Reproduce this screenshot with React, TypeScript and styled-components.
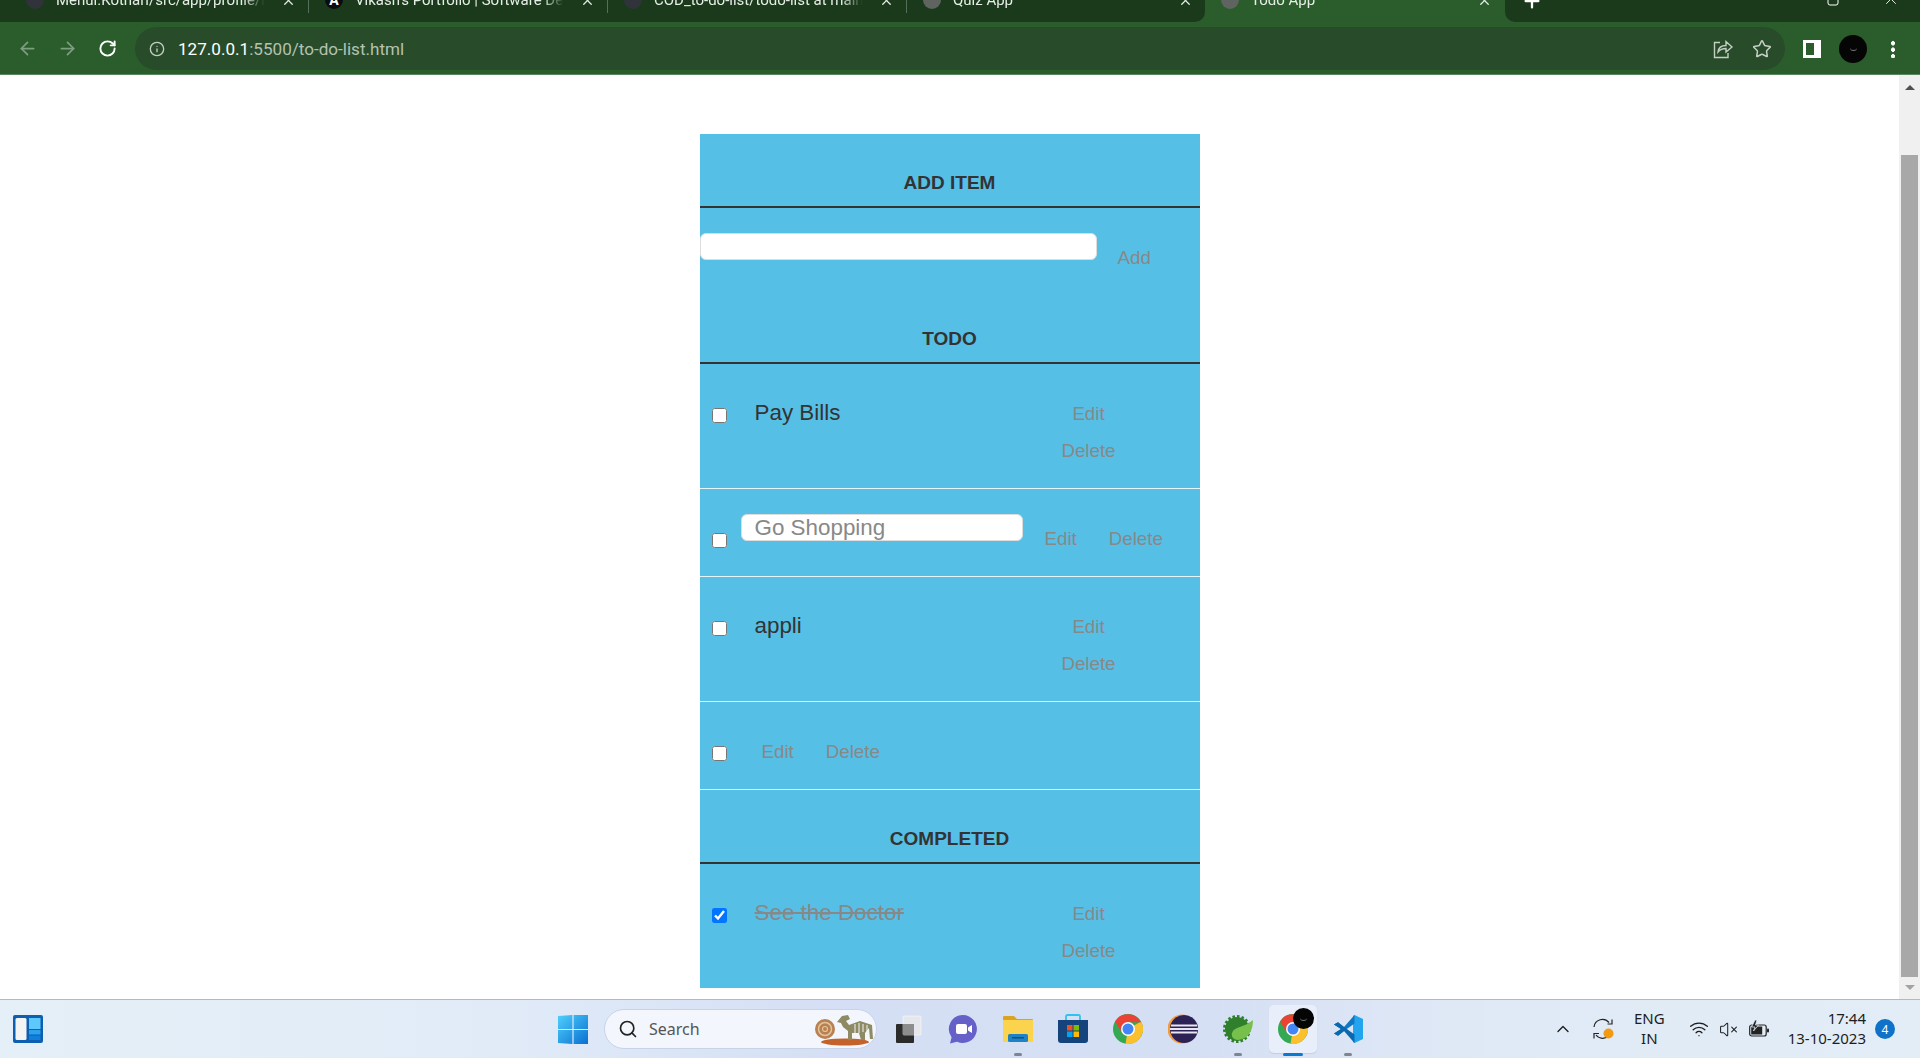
import styled, { createGlobalStyle } from 'styled-components';
import { ArrowLeft, ArrowRight, ChevronUp, Info, Plus, RotateCw, Search, Star, VolumeX, Wifi, X } from 'lucide-react';

const PANEL_BLUE = '#56bfe6';
const TAB_DARK = '#1a3a1b';
const TOOLBAR_GREEN = '#2a5d2b';

const GlobalStyle = createGlobalStyle`
  html, body {
    margin: 0;
    padding: 0;
    overflow: hidden;
    background: #fff;
  }
  * {
    box-sizing: border-box;
  }
`;

const Screen = styled.div`
  width: 1920px;
  height: 1058px;
  display: flex;
  flex-direction: column;
  overflow: hidden;
  font-family: 'Liberation Sans', Arial, sans-serif;
`;

/* browser chrome */
const TabStrip = styled.div`
  height: 22px;
  flex: none;
  display: flex;
  overflow: hidden;
  background: ${TOOLBAR_GREEN};
  font-family: Roboto, sans-serif;
  font-size: 15px;
  color: #e6ece6;
`;

const DarkTabs = styled.div`
  width: 1205px;
  height: 22px;
  padding-left: 10px;
  display: flex;
  background: ${TAB_DARK};
  border-bottom-right-radius: 10px;
`;

const Tab = styled.div<{ $active?: boolean }>`
  width: ${(p) => (p.$active ? '300px' : '299px')};
  height: 26px;
  margin-top: -13px;
  padding: 0 12px 0 16px;
  display: flex;
  align-items: center;
  gap: 12px;
  flex: none;
  border-right: 1px solid ${(p) => (p.$active ? 'transparent' : '#52705a')};

  &:nth-child(4) {
    border-right-color: transparent;
  }
`;

const TabTitle = styled.span`
  flex: 1;
  white-space: nowrap;
  overflow: hidden;
  -webkit-mask-image: linear-gradient(90deg, #000 88%, transparent 98%);
  mask-image: linear-gradient(90deg, #000 88%, transparent 98%);
`;

const Favicon = styled.span<{ $color: string }>`
  width: 18px;
  height: 18px;
  flex: none;
  border-radius: 50%;
  display: flex;
  align-items: center;
  justify-content: center;
  background: ${(p) => p.$color};
  font-size: 14px;
  font-weight: 700;
  color: #fff;
`;

const DarkRest = styled.div`
  flex: 1;
  height: 22px;
  display: flex;
  background: ${TAB_DARK};
  border-bottom-left-radius: 10px;
  color: #fff;
`;

const StripIcon = styled.span<{ $left: number; $top: number }>`
  height: 26px;
  margin: ${(p) => p.$top}px 0 0 ${(p) => p.$left}px;
  display: flex;
  align-items: center;
`;

const Toolbar = styled.div`
  height: 53px;
  flex: none;
  padding: 5px 0 4px 7px;
  display: flex;
  align-items: center;
  background: ${TOOLBAR_GREEN};
  border-bottom: 1px solid #5b8560;
`;

const NavButton = styled.span<{ $dim?: boolean }>`
  width: 40px;
  display: flex;
  justify-content: center;
  color: ${(p) => (p.$dim ? '#7d9f80' : '#fff')};
`;

const AddressBar = styled.div`
  width: 1650px;
  height: 43px;
  margin-left: 8px;
  padding: 0 13px 0 14px;
  display: flex;
  align-items: center;
  border-radius: 22px;
  background: #284c2a;
  color: #c4cfc4;
`;

const Url = styled.span`
  flex: 1;
  margin-left: 13px;
  font-family: Roboto, sans-serif;
  font-size: 17.1px;
  color: #b3c2b3;
`;

const UrlHost = styled.span`
  color: #fff;
`;

const BarIcon = styled.span<{ $left: number }>`
  margin-left: ${(p) => p.$left}px;
  display: flex;
`;

const ToolbarRight = styled.div`
  display: flex;
  align-items: center;
  color: #fff;
`;

const SidePanelIcon = styled.span`
  width: 18px;
  height: 18px;
  margin-left: 18px;
  background: #fff;
  padding: 3px 7px 3px 3px;

  &::before {
    content: '';
    display: block;
    width: 8px;
    height: 12px;
    background: ${TOOLBAR_GREEN};
  }
`;

const Avatar = styled.span<{ $size: number }>`
  width: ${(p) => p.$size}px;
  height: ${(p) => p.$size}px;
  border-radius: 50%;
  background: #050505;
  display: flex;
  align-items: center;
  justify-content: center;

  &::before {
    content: '';
    width: 7px;
    height: 3px;
    border-bottom: 1px solid #777;
    border-radius: 0 0 4px 4px;
  }
`;

const ToolbarAvatar = styled(Avatar)`
  margin-left: 18px;
`;

const Kebab = styled.span`
  margin-left: 24px;
  width: 4px;
  height: 18px;
  background: radial-gradient(circle, #fff 1.9px, transparent 2.2px) 0 0 / 4px 6.5px repeat-y;
`;

/* page */
const PageArea = styled.div`
  flex: 1;
  min-height: 0;
  display: flex;
  background: #fff;
`;

const PageContent = styled.main`
  flex: 1;
  padding-top: 59px;
  display: flex;
  justify-content: center;
`;

const Panel = styled.section`
  width: 500px;
  height: 854px;
  background: ${PANEL_BLUE};
  color: #333;
`;

const SectionHeading = styled.h3`
  margin: 0;
  padding: 38px 0 13px;
  font-size: 19px;
  font-weight: 700;
  line-height: 21px;
  text-align: center;
  text-transform: uppercase;
  border-bottom: 2px solid #333;
`;

const AddRow = styled.div`
  height: 82px;
  display: flex;
  align-items: flex-start;
  gap: 11px;
`;

const TextField = styled.input<{ $width: number; $indent: number }>`
  width: ${(p) => p.$width}px;
  height: 27px;
  margin-top: 25px;
  flex: none;
  padding: 0 0 0 ${(p) => p.$indent}px;
  border: 1px solid #ddd;
  border-radius: 6px;
  background: #fff;
  font-family: inherit;
  font-size: 22.4px;
  color: #888;
  outline: none;
`;

const TodoList = styled.ul`
  margin: 0;
  padding: 0;
  list-style: none;
`;

const TodoRow = styled.li<{ $last?: boolean }>`
  padding: 0 0 ${(p) => (p.$last ? '19px' : '20px')} 12px;
  display: flex;
  align-items: flex-start;
  border-bottom: ${(p) => (p.$last ? 'none' : '1px solid #e6f4fb')};
`;

const Check = styled.input`
  width: 15px;
  height: 15px;
  margin: 44px 0 0;
  flex: none;
`;

const TodoTitle = styled.label<{ $done?: boolean }>`
  flex: 1;
  margin: 29px 0 0 28px;
  font-size: 22.4px;
  line-height: 40px;
  color: ${(p) => (p.$done ? '#888' : '#333')};
  text-decoration: ${(p) => (p.$done ? 'line-through' : 'none')};
`;

const StackedActions = styled.div`
  width: 100px;
  margin: 30px 61px 0 0;
  display: flex;
  flex-direction: column;
  align-items: center;
`;

const InlineActions = styled.div<{ $left: number }>`
  margin: 30px 0 0 ${(p) => p.$left}px;
  display: flex;
  gap: 12px;
`;

const LinkButton = styled.button`
  height: 37px;
  padding: 2px 10px 0;
  border: none;
  background: none;
  font-family: inherit;
  font-size: 18.72px;
  color: #888;
`;

const AddButton = styled(LinkButton)`
  margin-top: 30px;
`;

const InlineField = styled(TextField)`
  margin-left: 14px;
`;

const Scrollbar = styled.aside`
  width: 21px;
  flex: none;
  padding: 0 2px;
  display: flex;
  flex-direction: column;
  align-items: center;
  background: #f0f0f0;
`;

const ScrollArrow = styled.span<{ $down?: boolean }>`
  width: 0;
  height: 0;
  margin: ${(p) => (p.$down ? '8px 0 0' : '10px 0 0')};
  border-left: 5px solid transparent;
  border-right: 5px solid transparent;
  border-${(p) => (p.$down ? 'top' : 'bottom')}: 5px solid ${(p) => (p.$down ? '#a3a3a3' : '#505050')};
`;

const ScrollThumb = styled.span`
  width: 100%;
  height: 822px;
  margin-top: 65px;
  background: #a8a8a8;
`;

/* taskbar */
const Taskbar = styled.footer`
  height: 59px;
  flex: none;
  display: grid;
  grid-template-columns: 545.5px auto 1fr;
  background: linear-gradient(90deg, #e5eff7 0%, #e2ecf8 24%, #d4dff5 44%, #d5dff4 62%, #e0eaf6 78%, #e3edf6 100%);
  border-top: 1px solid #b4b9be;
`;

const TaskLeft = styled.div`
  padding-left: 13px;
  display: flex;
  align-items: center;
`;

const TaskCenter = styled.div`
  display: flex;
  align-items: center;
`;

const TaskSlot = styled.div`
  position: relative;
  width: 55px;
  height: 48px;
  display: flex;
  align-items: center;
  justify-content: center;
`;

const ActiveTile = styled.span`
  position: absolute;
  left: 3px;
  top: 0;
  width: 48px;
  height: 48px;
  border-radius: 5px;
  background: #e8eefa;
  box-shadow: 0 1px 1px #c6cfe2;
`;

const RunDot = styled.span<{ $active?: boolean }>`
  position: absolute;
  left: 50%;
  bottom: -3px;
  width: ${(p) => (p.$active ? '20px' : '8px')};
  height: 3px;
  transform: translateX(-50%);
  border-radius: 2px;
  background: ${(p) => (p.$active ? '#0b78d0' : '#7d8590')};
`;

const SlotBadge = styled(Avatar)`
  position: absolute;
  top: 3px;
  left: 27px;
`;

const SlotIcon = styled.span`
  position: relative;
  display: flex;
`;

const SearchPill = styled.div`
  position: relative;
  width: 273px;
  height: 40px;
  margin: 0 3.5px 0 3.5px;
  padding-left: 13px;
  display: flex;
  align-items: center;
  gap: 11px;
  border: 1px solid #c9d3e8;
  border-radius: 20px;
  background: #f3f6fd;
  font-family: 'Noto Sans', sans-serif;
  font-size: 16px;
  color: #555;
`;

const SearchArt = styled.span`
  position: absolute;
  right: 1px;
  top: 3px;
  display: flex;
`;

const Tray = styled.div`
  padding-right: 25px;
  display: flex;
  align-items: center;
  justify-content: flex-end;
  font-family: 'Noto Sans', sans-serif;
  font-size: 15px;
  color: #1d1d1d;
`;

const TrayIcon = styled.span<{ $right: number }>`
  margin-right: ${(p) => p.$right}px;
  display: flex;
`;

const TrayText = styled.div<{ $align: string; $right: number }>`
  margin-right: ${(p) => p.$right}px;
  padding-bottom: 2px;
  line-height: 20px;
  text-align: ${(p) => p.$align};
  white-space: nowrap;
`;

const NoticeBadge = styled.span`
  width: 20px;
  height: 20px;
  border-radius: 50%;
  display: flex;
  align-items: center;
  justify-content: center;
  background: #0f72c8;
  color: #fff;
  font-size: 12px;
`;

const ChromeLogo = ({ size = 30 }: { size?: number }) => (
  <svg width={size} height={size} viewBox="0 0 24 24">
    <circle cx="12" cy="12" r="12" fill="#34a853" />
    <path d="M12 12 22.4 6A12 12 0 0 1 10 23.8Z" fill="#fbc02d" />
    <path d="M12 6.5H22.4A12 12 0 0 0 1.6 6L7 14.8Z" fill="#ea4335" />
    <circle cx="12" cy="12" r="5.6" fill="#fff" />
    <circle cx="12" cy="12" r="4.4" fill="#4285f4" />
  </svg>
);

const WidgetsLogo = () => (
  <svg width="30" height="28" viewBox="0 0 30 28">
    <rect width="30" height="28" rx="2" fill="#0f5fb0" />
    <rect x="2.5" y="3" width="11" height="22" rx="1.5" fill="#f4f4f4" />
    <rect x="16" y="3" width="11.5" height="11" fill="#5cc8fb" />
    <rect x="16" y="15" width="11.5" height="4.5" fill="#2aa0ee" />
    <rect x="16" y="20.5" width="11.5" height="4.5" fill="#0f7fdc" />
  </svg>
);

const StartLogo = () => (
  <svg width="30" height="29" viewBox="0 0 30 29">
    <defs>
      <linearGradient id="startGrad" x1="0" y1="0" x2="1" y2="1">
        <stop offset="0" stopColor="#4fd0fb" />
        <stop offset="1" stopColor="#0a6fd2" />
      </linearGradient>
    </defs>
    <path d="M0 1 14.4 0V14H0ZM15.6 0 30 0V14H15.6ZM0 15H14.4V29L0 28ZM15.6 15H30V29H15.6Z" fill="url(#startGrad)" />
  </svg>
);

const TaskViewLogo = () => (
  <svg width="28" height="28" viewBox="0 0 28 28">
    <rect x="2" y="9" width="18" height="19" rx="1" fill="#2b2b2b" />
    <rect x="9" y="1" width="18" height="19" rx="1" fill="#e8e8ea" fillOpacity="0.88" stroke="#fff" strokeWidth="0.5" />
    <rect x="9" y="9" width="11" height="11" fill="#8d8d8d" />
  </svg>
);

const MeetLogo = () => (
  <svg width="30" height="30" viewBox="0 0 30 30">
    <path d="M15 1a14 14 0 1 1-6 26.7L2 29.5l1.6-6.3A14 14 0 0 1 15 1Z" fill="#6561c9" />
    <rect x="8" y="10" width="11" height="10" rx="2" fill="#fff" />
    <path d="M20 13.5 24 11v8l-4-2.5Z" fill="#fff" />
  </svg>
);

const FolderLogo = () => (
  <svg width="30" height="30" viewBox="0 0 30 30">
    <path d="M0 3a1 1 0 0 1 1-1h10l3 3h15a1 1 0 0 1 1 1v3H0Z" fill="#d9a520" />
    <path d="M0 6h30v22H0Z" fill="#fcd34d" />
    <rect x="5" y="20" width="20" height="8" rx="1.5" fill="#1d83c6" />
    <rect x="9" y="23" width="12" height="1.5" fill="#0f4f86" />
  </svg>
);

const StoreLogo = () => (
  <svg width="30" height="30" viewBox="0 0 30 30">
    <path d="M8 6V2.5A1.5 1.5 0 0 1 9.5 1h11A1.5 1.5 0 0 1 22 2.5V6" fill="none" stroke="#2fc4ef" strokeWidth="1.8" />
    <path d="M0 6h30v20a3 3 0 0 1-3 3H3a3 3 0 0 1-3-3Z" fill="#15447d" />
    <rect x="9" y="11" width="5.5" height="5.5" fill="#f25022" />
    <rect x="15.5" y="11" width="5.5" height="5.5" fill="#7fba00" />
    <rect x="9" y="17.5" width="5.5" height="5.5" fill="#00a4ef" />
    <rect x="15.5" y="17.5" width="5.5" height="5.5" fill="#ffb900" />
  </svg>
);

const EclipseLogo = () => (
  <svg width="30" height="30" viewBox="0 0 30 30">
    <circle cx="14" cy="15" r="14.5" fill="#f29b38" />
    <circle cx="16" cy="15" r="14" fill="#2c2255" />
    <rect x="3" y="10.5" width="26" height="2" fill="#e8e6f0" />
    <rect x="2" y="14" width="28" height="2" fill="#e8e6f0" />
    <rect x="3" y="17.5" width="26" height="2" fill="#e8e6f0" />
  </svg>
);

const SpringLogo = () => (
  <svg width="30" height="30" viewBox="0 0 30 30">
    <circle cx="14" cy="15" r="12.5" fill="none" stroke="#2f7f2c" strokeWidth="3" strokeDasharray="2.5 2" />
    <circle cx="14" cy="15" r="12" fill="#2f7f2c" />
    <path d="M30 6C30 17 25 25 15 26 10 26 8 22 9 19 11 12 21 14 30 6Z" fill="#78c04c" />
  </svg>
);

const VsCodeLogo = () => (
  <svg width="30" height="30" viewBox="0 0 30 30">
    <path d="M21.5 1 30 5v20l-8.5 4-1.5-1V2Z" fill="#23a4ee" />
    <path d="M21.5 1v8.5L11 17 5 21.8 1 19.5 8 15 1 10.5 5 8.2 11 13Z" fill="#0f78c4" />
    <path d="M21.5 29v-8.5L11 13 5 8.2 1 10.5 8 15 1 19.5 5 21.8 11 17Z" fill="#0a68ae" />
  </svg>
);

const SearchScene = () => (
  <svg width="60" height="33" viewBox="0 0 60 33">
    <ellipse cx="30" cy="29" rx="24" ry="3.5" fill="#c4622b" />
    <circle cx="10" cy="16" r="10" fill="#b98052" />
    <circle cx="10" cy="16" r="6.5" fill="none" stroke="#e3c49b" strokeWidth="1.5" />
    <circle cx="10" cy="16" r="2.5" fill="none" stroke="#e3c49b" strokeWidth="1.2" />
    <path d="M22 9 27 3 33 2 35 6 31 8 34 12 45 8 57 12 58 26 55 26 54 15 50 20 50 27 46 27 44 20 37 20 37 27 33 27 33 18 28 14 26 10Z" fill="#8e8a63" />
    <path d="M40 11v9M44 10v10M48 11v8M52 12v9" stroke="#f3f6fd" strokeWidth="1" />
  </svg>
);

const ShareIcon = () => (
  <svg width="20" height="20" viewBox="0 0 20 20" fill="none" stroke="currentColor" strokeWidth="1.4">
    <path d="M7 3.5H1.5V18.5H15V14" />
    <path d="M5 13C5.5 8.5 9 6.5 13 6.5V2.5L19 8 13 13V9.5C9.5 9.5 7 10.5 5 13Z" />
  </svg>
);

const SyncIcon = () => (
  <svg width="21" height="22" viewBox="0 0 21 22" fill="none" stroke="#222" strokeWidth="1.2">
    <path d="M1 9A8.5 8.5 0 0 1 16 4.5M19 1.5V6H14.5" />
    <path d="M16 17.5A8.5 8.5 0 0 1 3 17M1 20.5V15.5H6" />
    <circle cx="15.5" cy="15.5" r="5" fill="#f59a0c" stroke="none" />
  </svg>
);

const BatteryIcon = () => (
  <svg width="20" height="18" viewBox="0 0 20 18">
    <rect x="0.7" y="5" width="16.5" height="11" rx="2" fill="#e3edf6" stroke="#222" strokeWidth="1.2" />
    <rect x="2.2" y="6.5" width="11" height="8" fill="#222" />
    <rect x="18" y="8.5" width="2" height="4" rx="1" fill="#222" />
    <path d="M6 0 2.5 7H6L4.5 11 9.5 5H6.5L8 0Z" fill="#222" stroke="#e3edf6" strokeWidth="0.8" />
  </svg>
);

const tabs = [
  { title: 'Mehul.Kothari/src/app/profile/in', icon: '#30343a', glyph: '' },
  { title: "Vikash's Portfolio | Software Developer", icon: '#0b0b12', glyph: 'A' },
  { title: 'COD_to-do-list/todo-list at main', icon: '#30343a', glyph: '' },
  { title: 'Quiz App', icon: '#5f6460', glyph: '' },
];

const Actions = ({ stacked }: { stacked?: boolean }) => {
  const Wrap = stacked ? StackedActions : InlineActions;
  return (
    <Wrap $left={12}>
      <LinkButton>Edit</LinkButton>
      <LinkButton>Delete</LinkButton>
    </Wrap>
  );
};

export default function App() {
  return (
    <Screen>
      <GlobalStyle />
      <TabStrip>
        <DarkTabs>
          {tabs.map((tab) => (
            <Tab key={tab.title}>
              <Favicon $color={tab.icon}>{tab.glyph}</Favicon>
              <TabTitle>{tab.title}</TabTitle>
              <X size={15} />
            </Tab>
          ))}
        </DarkTabs>
        <Tab $active>
          <Favicon $color="#5f6460" />
          <TabTitle>Todo App</TabTitle>
          <X size={15} />
        </Tab>
        <DarkRest>
          <StripIcon $left={16} $top={-12}>
            <Plus size={22} strokeWidth={2.5} />
          </StripIcon>
          <StripIcon $left={176} $top={-14}>
            <svg width="12" height="2" viewBox="0 0 12 2">
              <rect width="12" height="2" fill="#fff" />
            </svg>
          </StripIcon>
          <StripIcon $left={96} $top={-14}>
            <svg width="12" height="24" viewBox="0 0 12 24" fill="none" stroke="#fff">
              <rect x="1" y="6" width="10" height="12" rx="2" />
            </svg>
          </StripIcon>
          <StripIcon $left={43} $top={-14}>
            <X size={18} strokeWidth={1.2} />
          </StripIcon>
        </DarkRest>
      </TabStrip>

      <Toolbar>
        <NavButton $dim>
          <ArrowLeft size={21} />
        </NavButton>
        <NavButton $dim>
          <ArrowRight size={21} />
        </NavButton>
        <NavButton>
          <RotateCw size={19} strokeWidth={2.4} />
        </NavButton>
        <AddressBar>
          <Info size={16} />
          <Url>
            <UrlHost>127.0.0.1</UrlHost>:5500/to-do-list.html
          </Url>
          <BarIcon $left={0}>
            <ShareIcon />
          </BarIcon>
          <BarIcon $left={19}>
            <Star size={20} strokeWidth={1.8} />
          </BarIcon>
        </AddressBar>
        <ToolbarRight>
          <SidePanelIcon />
          <ToolbarAvatar $size={28} />
          <Kebab />
        </ToolbarRight>
      </Toolbar>

      <PageArea>
        <PageContent>
          <Panel>
            <SectionHeading>Add Item</SectionHeading>
            <AddRow>
              <TextField $width={397} $indent={14} type="text" />
              <AddButton>Add</AddButton>
            </AddRow>

            <SectionHeading>Todo</SectionHeading>
            <TodoList>
              <TodoRow>
                <Check type="checkbox" />
                <TodoTitle>Pay Bills</TodoTitle>
                <Actions stacked />
              </TodoRow>
              <TodoRow>
                <Check type="checkbox" />
                <InlineField $width={282} $indent={13} type="text" defaultValue="Go Shopping" />
                <Actions />
              </TodoRow>
              <TodoRow>
                <Check type="checkbox" />
                <TodoTitle>appli</TodoTitle>
                <Actions stacked />
              </TodoRow>
              <TodoRow>
                <Check type="checkbox" />
                <InlineActions $left={25}>
                  <LinkButton>Edit</LinkButton>
                  <LinkButton>Delete</LinkButton>
                </InlineActions>
              </TodoRow>
            </TodoList>

            <SectionHeading>Completed</SectionHeading>
            <TodoList>
              <TodoRow $last>
                <Check type="checkbox" defaultChecked />
                <TodoTitle $done>See the Doctor</TodoTitle>
                <Actions stacked />
              </TodoRow>
            </TodoList>
          </Panel>
        </PageContent>
        <Scrollbar>
          <ScrollArrow />
          <ScrollThumb />
          <ScrollArrow $down />
        </Scrollbar>
      </PageArea>

      <Taskbar>
        <TaskLeft>
          <WidgetsLogo />
        </TaskLeft>
        <TaskCenter>
          <TaskSlot>
            <StartLogo />
          </TaskSlot>
          <SearchPill>
            <Search size={20} color="#222" />
            Search
            <SearchArt>
              <SearchScene />
            </SearchArt>
          </SearchPill>
          <TaskSlot>
            <TaskViewLogo />
          </TaskSlot>
          <TaskSlot>
            <MeetLogo />
          </TaskSlot>
          <TaskSlot>
            <FolderLogo />
            <RunDot />
          </TaskSlot>
          <TaskSlot>
            <StoreLogo />
          </TaskSlot>
          <TaskSlot>
            <ChromeLogo />
          </TaskSlot>
          <TaskSlot>
            <EclipseLogo />
          </TaskSlot>
          <TaskSlot>
            <SpringLogo />
            <RunDot />
          </TaskSlot>
          <TaskSlot>
            <ActiveTile />
            <SlotIcon>
              <ChromeLogo />
            </SlotIcon>
            <SlotBadge $size={21} />
            <RunDot $active />
          </TaskSlot>
          <TaskSlot>
            <VsCodeLogo />
            <RunDot />
          </TaskSlot>
        </TaskCenter>
        <Tray>
          <TrayIcon $right={20}>
            <ChevronUp size={20} strokeWidth={1.6} />
          </TrayIcon>
          <TrayIcon $right={20}>
            <SyncIcon />
          </TrayIcon>
          <TrayText $align="center" $right={24}>
            ENG
            <br />
            IN
          </TrayText>
          <TrayIcon $right={10}>
            <Wifi size={20} strokeWidth={1.6} />
          </TrayIcon>
          <TrayIcon $right={11}>
            <VolumeX size={19} strokeWidth={1.3} />
          </TrayIcon>
          <TrayIcon $right={19}>
            <BatteryIcon />
          </TrayIcon>
          <TrayText $align="right" $right={9}>
            17:44
            <br />
            13-10-2023
          </TrayText>
          <NoticeBadge>4</NoticeBadge>
        </Tray>
      </Taskbar>
    </Screen>
  );
}
